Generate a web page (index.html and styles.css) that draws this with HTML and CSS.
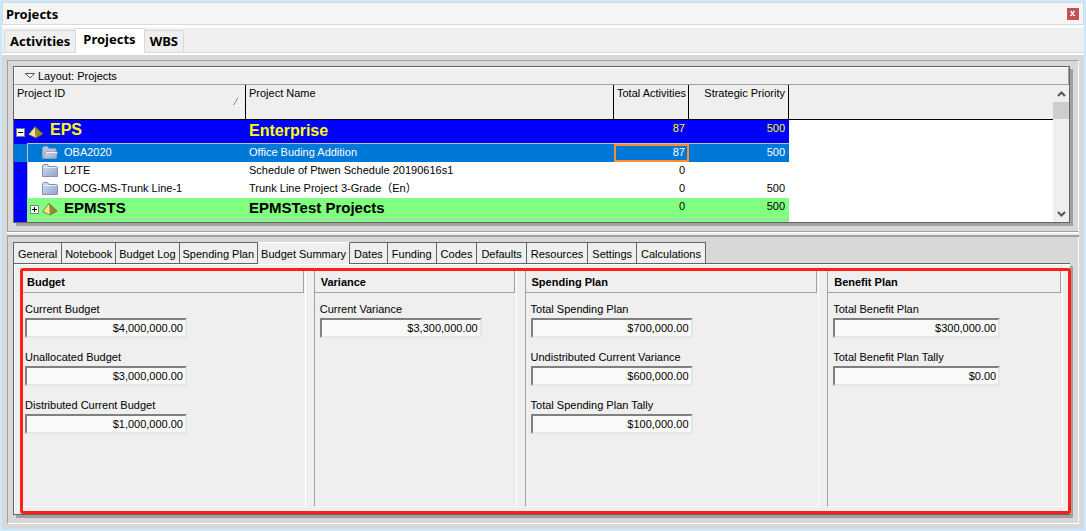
FILE: index.html
```html
<!DOCTYPE html>
<html lang="en">
<head>
<meta charset="utf-8">
<title>Projects</title>
<link rel="stylesheet" href="styles.css">
</head>
<body>
<svg class="defs" aria-hidden="true">
  <defs>
    <linearGradient id="folder-fill" x1="0" y1="0" x2="1" y2="1">
      <stop offset="0" stop-color="#d3dff0"/>
      <stop offset="1" stop-color="#8fa5cc"/>
    </linearGradient>
    <symbol id="folder" viewBox="0 0 16 14">
      <path d="M.5 12.500v-10.500l1-1.500h4l1.500 2h7.500l1 1v9z" fill="url(#folder-fill)" stroke="#7f90b0"/>
      <path d="M1.500 3.500h13" stroke="#e6eefa"/>
    </symbol>
    <symbol id="folder-open" viewBox="0 0 16 14">
      <path d="M.5 12.500v-10.500l1-1.500h4l1.500 2h6.500l.5 1v9z" fill="#b4c4da" stroke="#8b9bb5"/>
      <path d="M1 12.500l2.500-6.500h12l-1.500 6.500z" fill="url(#folder-fill)" stroke="#8b9bb5"/>
      <path d="M4 6.500h11" stroke="#eef3fa"/>
    </symbol>
    <symbol id="pyramid" viewBox="0 0 16 13">
      <path d="M7 .5L.5 8.500 8 12z" fill="#f0e68a"/>
      <path d="M7 .5L15 8 8 12z" fill="#a08a30"/>
      <path d="M7 .5L.5 8.500 8 12 15 8z" fill="none" stroke="#5c5020" stroke-width=".7"/>
    </symbol>
  </defs>
</svg>
<div class="window">
  <header class="titlebar">
    <h1 class="title">Projects</h1>
    <button class="close" aria-label="Close"><svg viewBox="0 0 12 12"><path d="M3 3h2v1h1V3h2v1H7v1H6.500v1H7v1h1v1H6V7H5v1H3V7h1V6h.5V5H4V4H3z" fill="#fff"/></svg></button>
  </header>
  <nav class="views">
    <button class="view">Activities</button>
    <button class="view view-active">Projects</button>
    <button class="view">WBS</button>
  </nav>
  <main class="workspace">
    <section class="pane pane-top">
      <div class="sheet">
        <button class="layout-bar"><svg class="caret" viewBox="0 0 10 6"><path d="M.5 .5h9L5 5z" fill="#fff" stroke="#555"/></svg>Layout: Projects</button>
        <div class="grid-view">
          <table class="projects">
            <colgroup><col class="col-id"><col class="col-name"><col class="col-total"><col class="col-priority"><col></colgroup>
            <thead>
              <tr>
                <th><div class="sort-head">Project ID<svg class="sort" viewBox="0 0 9 9"><path d="M.5 8.500h7.500L5 .5" fill="none" stroke="#fff"/><path d="M.5 8.500L5 .5" stroke="#888"/></svg></div></th>
                <th>Project Name</th>
                <th class="num">Total Activities</th>
                <th class="num">Strategic Priority</th>
                <th class="filler"></th>
              </tr>
            </thead>
            <tbody>
              <tr class="group group-root">
                <td><div class="tree"><button class="toggle" aria-label="Collapse EPS"><svg viewBox="0 0 9 9"><path d="M2 4.500h5" stroke="#000"/></svg></button><svg class="pyramid"><use href="#pyramid"/></svg><span class="group-id">EPS</span></div></td>
                <td class="group-name">Enterprise</td><td class="num">87</td><td class="num">500</td><td class="filler"></td>
              </tr>
              <tr class="selected">
                <td><div class="tree leaf"><svg class="folder"><use href="#folder-open"/></svg>OBA2020</div></td>
                <td>Office Buding Addition</td><td class="num focused">87</td><td class="num">500</td><td class="filler"></td>
              </tr>
              <tr>
                <td><div class="tree leaf"><svg class="folder"><use href="#folder"/></svg>L2TE</div></td>
                <td>Schedule of Ptwen Schedule 20190616s1</td><td class="num">0</td><td class="num"></td><td class="filler"></td>
              </tr>
              <tr>
                <td><div class="tree leaf"><svg class="folder"><use href="#folder"/></svg>DOCG-MS-Trunk Line-1</div></td>
                <td>Trunk Line Project 3-Grade（En）</td><td class="num">0</td><td class="num">500</td><td class="filler"></td>
              </tr>
              <tr class="group group-child">
                <td><div class="tree"><button class="toggle" aria-label="Expand EPMSTS"><svg viewBox="0 0 9 9"><path d="M2 4.500h5M4.500 2v5" stroke="#000"/></svg></button><svg class="pyramid"><use href="#pyramid"/></svg><span class="group-id">EPMSTS</span></div></td>
                <td class="group-name">EPMSTest Projects</td><td class="num">0</td><td class="num">500</td><td class="filler"></td>
              </tr>
            </tbody>
          </table>
          <div class="scrollbar">
            <button class="scroll-button" aria-label="Scroll up"><svg viewBox="0 0 9 6"><path d="M1 5l3.500-3.500L8 5" fill="none" stroke="#555" stroke-width="2"/></svg></button>
            <div class="thumb"></div>
            <button class="scroll-button scroll-down" aria-label="Scroll down"><svg viewBox="0 0 9 6"><path d="M1 1l3.500 3.500L8 1" fill="none" stroke="#555" stroke-width="2"/></svg></button>
          </div>
        </div>
      </div>
    </section>
    <div class="splitter"></div>
    <section class="pane pane-bottom">
      <nav class="tabs">
        <button class="tab">General</button>
        <button class="tab tab-snug">Notebook</button>
        <button class="tab tab-snug">Budget Log</button>
        <button class="tab tab-snug">Spending Plan</button>
        <button class="tab tab-snug tab-active">Budget Summary</button>
        <button class="tab">Dates</button>
        <button class="tab">Funding</button>
        <button class="tab">Codes</button>
        <button class="tab">Defaults</button>
        <button class="tab">Resources</button>
        <button class="tab">Settings</button>
        <button class="tab">Calculations</button>
      </nav>
      <div class="details">
        <div class="summary">
          <section class="card">
            <h2 class="card-title">Budget</h2>
            <div class="fields">
              <label class="field">Current Budget<input class="amount" value="$4,000,000.00" readonly></label>
              <label class="field">Unallocated Budget<input class="amount" value="$3,000,000.00" readonly></label>
              <label class="field">Distributed Current Budget<input class="amount" value="$1,000,000.00" readonly></label>
            </div>
          </section>
          <section class="card">
            <h2 class="card-title">Variance</h2>
            <div class="fields">
              <label class="field">Current Variance<input class="amount" value="$3,300,000.00" readonly></label>
            </div>
          </section>
          <section class="card">
            <h2 class="card-title">Spending Plan</h2>
            <div class="fields">
              <label class="field">Total Spending Plan<input class="amount" value="$700,000.00" readonly></label>
              <label class="field">Undistributed Current Variance<input class="amount" value="$600,000.00" readonly></label>
              <label class="field">Total Spending Plan Tally<input class="amount" value="$100,000.00" readonly></label>
            </div>
          </section>
          <section class="card">
            <h2 class="card-title">Benefit Plan</h2>
            <div class="fields">
              <label class="field">Total Benefit Plan<input class="amount amount-wide" value="$300,000.00" readonly></label>
              <label class="field">Total Benefit Plan Tally<input class="amount amount-wide" value="$0.00" readonly></label>
            </div>
          </section>
        </div>
      </div>
    </section>
  </main>
</div>
</body>
</html>
```

FILE: styles.css
```css
* { box-sizing: border-box; }

body {
  margin: 0;
  min-height: 100vh;
  padding: 2px;
  display: flex;
  background: #cce8ff;
  color: #000;
  font: 11px/14px "Liberation Sans", Arial, "Noto Sans CJK SC", sans-serif;
}

button {
  margin: 0;
  padding: 0;
  border: 0;
  background: none;
  color: inherit;
  font: inherit;
}

svg { display: block; flex: none; }
.defs { position: absolute; width: 0; height: 0; }

.window {
  flex: 1;
  min-width: 0;
  display: flex;
  flex-direction: column;
  background: #fff;
}

.titlebar {
  display: flex;
  align-items: center;
  justify-content: space-between;
  height: 23px;
  padding: 0 4px 0 3px;
  border: 1px solid #d9d9d9;
  background: #f5f5f5;
}

.title, .view { font: bold 13px/18px "Noto Sans", sans-serif; }
.title { margin: 0; }
.close { width: 12px; height: 12px; background: #c75050; }

.views {
  display: flex;
  align-items: flex-end;
  height: 25px;
  margin-top: 3px;
  padding-left: 2px;
  border-bottom: 1px solid #d9d9d9;
  background: #efefef;
}

.view {
  height: 22px;
  padding: 0 5px 1px;
  border: 1px solid #d9d9d9;
  border-bottom: 0;
}

.view + .view { border-left: 0; }

.view-active {
  height: 25px;
  margin-bottom: -1px;
  padding: 0 8px 4px 7px;
  background: #fff;
}

.workspace {
  flex: 1;
  display: flex;
  flex-direction: column;
  margin-top: 2px;
  padding: 5px;
  background: #d8d8d8;
}

.pane {
  border-left: 1px solid #a0a0a0;
  border-right: 1px solid #fff;
}

.pane-top {
  padding: 5px 8px 8px 5px;
  border-top: 1px solid #a0a0a0;
  border-bottom: 1px solid #a0a0a0;
}

.splitter {
  height: 5px;
  border-top: 1px solid #fff;
  border-bottom: 2px solid #a0a0a0;
  background: #ececec;
}

.sheet {
  border: 1px solid #646464;
  box-shadow: 3px 3px 0 #a0a0a0;
  background: #fff;
}

.layout-bar {
  display: flex;
  align-items: center;
  gap: 3px;
  width: 100%;
  height: 18px;
  padding-left: 10px;
  border: 1px solid #fff;
  border-right-color: #a0a0a0;
  border-bottom-color: #a0a0a0;
  background: #efefef;
}

.caret { width: 10px; height: 6px; }
.grid-view { display: flex; }

.projects {
  flex: 1;
  width: 0;
  table-layout: fixed;
  border-collapse: separate;
  border-spacing: 0;
}

.col-id { width: 232px; }
.col-name { width: 368px; }
.col-total { width: 75px; }
.col-priority { width: 100px; }

.projects th {
  height: 35px;
  padding: 1px 3px 0;
  border-right: 1px solid #000;
  border-bottom: 1px solid #000;
  background: #efefef;
  font-weight: normal;
  text-align: left;
  vertical-align: top;
  white-space: nowrap;
}

.projects th.filler { border-right: 0; }
.projects .num { text-align: right; }
.sort-head { display: flex; justify-content: space-between; }
.sort { width: 9px; height: 9px; margin-top: 11px; }

.projects td {
  height: 18px;
  padding: 0 4px 0 3px;
  line-height: 16px;
  vertical-align: top;
  white-space: nowrap;
}

.projects td:first-child { padding: 0; }

.tree {
  display: flex;
  align-items: center;
  gap: 3px;
  padding-left: 2px;
}

.leaf {
  gap: 6px;
  height: 18px;
  padding: 0 0 2px 14px;
  margin-left: 13px;
  border-left: 1px solid #c0c0c0;
}

.projects tr:not(.group):not(.selected) td:first-child {
  background: linear-gradient(#00f, #00f) left / 13px 100% no-repeat;
}

.folder { width: 16px; height: 14px; margin-top: 2px; }
.pyramid { width: 16px; height: 13px; }

.toggle {
  width: 9px;
  height: 9px;
  background: #fff;
  outline: 1px solid #808080;
  outline-offset: -1px;
}

.toggle, .group .pyramid { margin-top: 4px; }

.projects .group td { height: 24px; }
.group .tree { line-height: 20px; }
.group-id { margin-left: 3px; }
.projects .group-name { font-weight: bold; line-height: 22px; }
.group-root .group-id, .projects .group-root .group-name { font-size: 16px; font-weight: bold; }
.group-child .group-id, .projects .group-child .group-name { font-size: 15px; font-weight: bold; }
.projects .group-child .group-name { line-height: 20px; }

.group-root td:not(.filler) {
  background: #00f;
  color: #ff0;
  border-bottom: 1px solid #c0c0c0;
}

.projects .group-root td:first-child {
  border-bottom: 0;
  background: linear-gradient(#c0c0c0, #c0c0c0) 13px bottom / 100% 1px no-repeat #00f;
}

.projects .selected td:not(.filler) { background: #0078d7; color: #fff; }
.projects .selected .focused { outline: 2px solid #ff8c28; outline-offset: -2px; }

.group-child td:not(.filler) {
  background: linear-gradient(#c0c0c0, #c0c0c0) left 0 top 21px / 100% 1px no-repeat #80ff80;
}

.group-child .tree {
  height: 24px;
  padding: 0 0 5px 3px;
  border-left: 13px solid #00f;
}

.scrollbar {
  display: flex;
  flex-direction: column;
  width: 16px;
  background: #efefef;
}

.scroll-button {
  display: flex;
  align-items: center;
  justify-content: center;
  height: 17px;
}

.scroll-button svg { width: 9px; height: 6px; }
.scroll-down { margin-top: auto; }
.thumb { height: 17px; background: #cdcdcd; }

.pane-bottom {
  flex: 1;
  display: flex;
  flex-direction: column;
  padding: 5px 8px 8px 5px;
  border-bottom: 1px solid #fff;
}

.tabs { display: flex; padding-right: 8px; }

.tab {
  height: 21px;
  padding: 2px 4px 0;
  border: 1px solid #646464;
  border-left-width: 0;
  border-bottom: 0;
  background: #efefef;
  white-space: nowrap;
}

.tab:first-child { border-left-width: 1px; }
.tab-snug { padding: 2px 3px 0; }

.tab-active {
  z-index: 1;
  height: 22px;
  margin-bottom: -1px;
  padding-bottom: 1px;
  border-top-color: #fff;
}

.details {
  flex: 1;
  display: flex;
  padding: 4px 0 0 6px;
  border: 1px solid #646464;
  border-right: 0;
  box-shadow: inset 1px 1px 0 #fff, 3px 3px 0 #a0a0a0;
  background: #efefef;
}

.summary {
  flex: 1;
  display: grid;
  grid-template-columns: 283fr 203fr 295fr 236fr;
  gap: 8px;
  margin-right: -1px;
  padding: 0 5px 4px 0;
  border: 3px solid #ff1f14;
  border-radius: 3px;
}

.card {
  border: 1px solid #fff;
  border-top: 0;
  border-left-color: #a0a0a0;
}

.card:first-child { border-left: 0; }

.card-title {
  margin: 0 1px 0 0;
  padding: 4px 6px 3px;
  border-right: 1px solid #a0a0a0;
  border-bottom: 1px solid #a0a0a0;
  font: bold 11px/14px "Liberation Sans", Arial, sans-serif;
}

.card:first-child .card-title { padding-left: 4px; }

.fields {
  display: flex;
  flex-direction: column;
  gap: 12px;
  padding: 9px 5px;
}

.card:first-child .fields { padding-left: 2px; }
.field { display: flex; flex-direction: column; gap: 2px; }

.amount {
  width: 162px;
  max-width: 100%;
  height: 20px;
  padding: 0 2px;
  border: 2px solid;
  border-color: #808080 #e6e6e6 #e6e6e6 #808080;
  background: #f9f9f9;
  font: inherit;
  text-align: right;
}

.amount-wide { width: 167px; }
```
